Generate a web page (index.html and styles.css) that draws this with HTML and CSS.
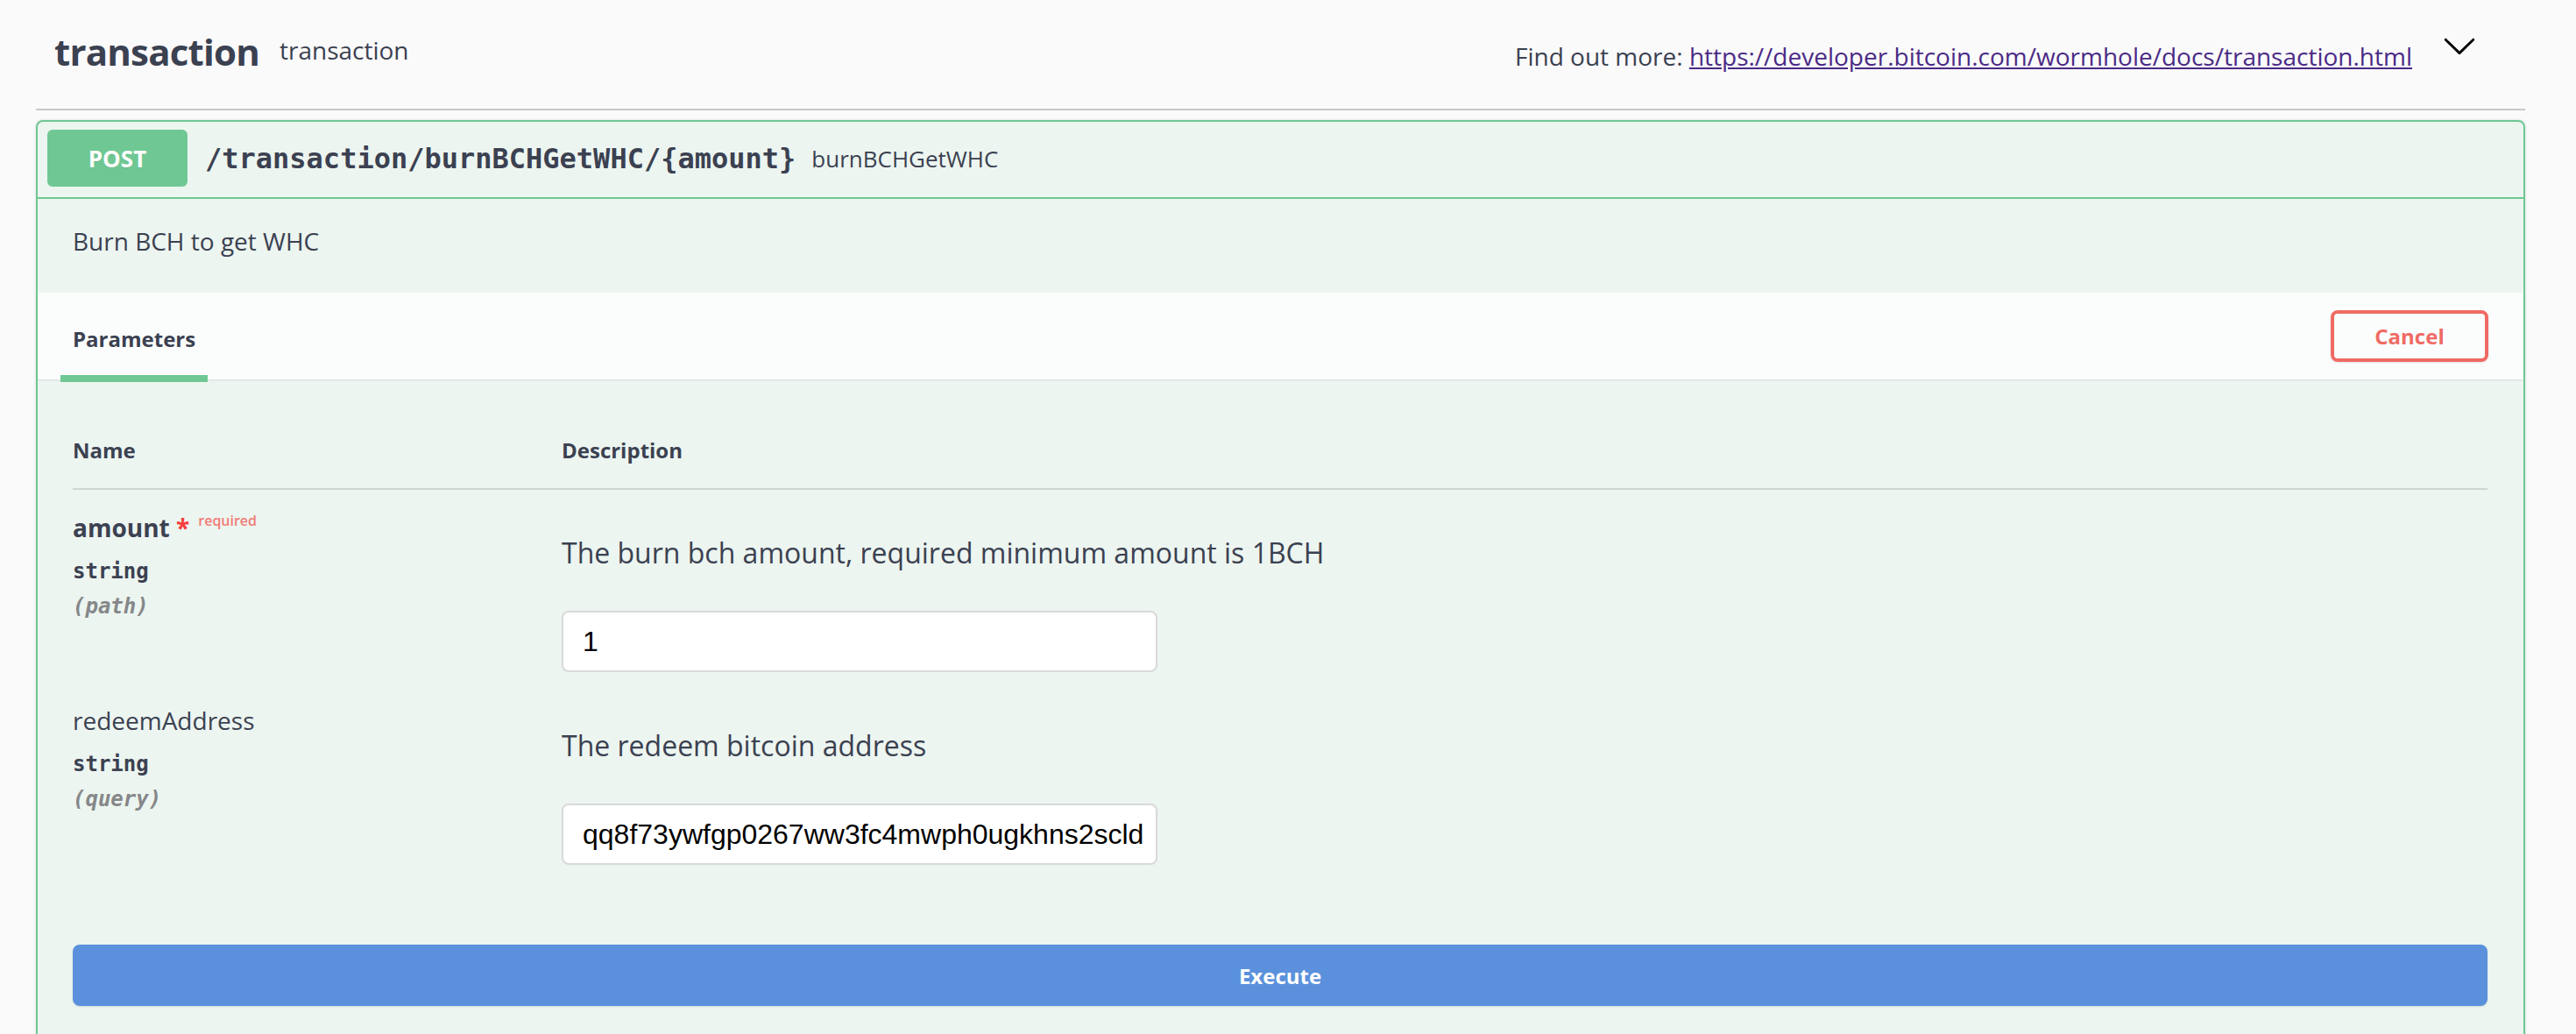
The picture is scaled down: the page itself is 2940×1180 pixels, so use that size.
FILE: index.html
```html
<!DOCTYPE html>
<html lang="en">
<head>
<meta charset="utf-8">
<title>transaction</title>
<link rel="stylesheet" href="styles.css">
</head>
<body>
<div class="wrapper">
  <div class="tag">
    <h4 class="tag-title">transaction</h4>
    <span class="tag-sub">transaction</span>
    <span class="tag-more">Find out more: <a href="#">https://developer.bitcoin.com/wormhole/docs/transaction.html</a></span>
    <svg class="chev" viewBox="0 0 20 20" width="40" height="40"><path d="M17.418 6.109c.272-.268.709-.268.979 0s.271.701 0 .969l-7.908 7.83c-.27.268-.707.268-.979 0l-7.908-7.830c-.27-.268-.27-.701 0-.969.271-.268.709-.268.979 0L10 13.25l7.418-7.141z" fill="#000"/></svg>
  </div>

  <div class="opblock">
    <div class="summary">
      <span class="method">POST</span>
      <span class="path">/transaction/burnBCHGetWHC/{amount}</span>
      <span class="summary-desc">burnBCHGetWHC</span>
    </div>
    <div class="op-desc">Burn BCH to get WHC</div>
    <div class="tab-header">
      <div class="tab-item">Parameters</div>
      <button class="btn-cancel">Cancel</button>
    </div>
    <div class="params">
      <div class="params-head">
        <div>Name</div>
        <div>Description</div>
      </div>
      <div class="param-row">
        <div class="param-name-col">
          <div class="param-name"><b>amount</b> <span class="star">*</span><span class="req">required</span></div>
          <div class="param-type">string</div>
          <div class="param-in">(path)</div>
        </div>
        <div class="param-desc-col">
          <p class="param-desc">The burn bch amount, required minimum amount is 1BCH</p>
          <input class="param-input" type="text" value="1">
        </div>
      </div>
      <div class="param-row">
        <div class="param-name-col">
          <div class="param-name">redeemAddress</div>
          <div class="param-type">string</div>
          <div class="param-in">(query)</div>
        </div>
        <div class="param-desc-col">
          <p class="param-desc">The redeem bitcoin address</p>
          <input class="param-input" type="text" value="qq8f73ywfgp0267ww3fc4mwph0ugkhns2scld">
        </div>
      </div>
      <button class="btn-execute">Execute</button>
    </div>
  </div>
</div>
</body>
</html>
```
FILE: styles.css
```css
* { box-sizing: border-box; }
body {
  margin: 0;
  background: #fafafa;
  font-family: "Open Sans", sans-serif;
  color: #3b4151;
  overflow: hidden;
}
.wrapper { padding: 0 58px 0 41px; }

.tag {
  display: flex;
  align-items: center;
  height: 126px;
  border-bottom: 2px solid #c7c8cc;
  padding: 0 55px 0 21px;
}
.tag-title {
  margin: 0 0 6px 0;
  font-size: 42px;
  font-weight: 700;
  letter-spacing: -0.8px;
  line-height: 60px;
}
.tag-sub {
  margin: 0 0 10px 23px;
  font-size: 28px;
  line-height: 38px;
}
.tag-more {
  margin-left: auto;
  padding-top: 4px;
  font-size: 28px;
  line-height: 38px;
}
.tag-more a { color: #4b2a86; }
.chev { margin: 0 0 20px 34px; flex: none; }

.opblock {
  margin-top: 11px;
  border: 2px solid #6fc893;
  border-radius: 8px;
  background: #ecf5f0;
  box-shadow: 0 0 3px rgba(0, 0, 0, .15);
}
.summary {
  display: flex;
  align-items: center;
  padding: 9px 11px 12px;
  border-bottom: 2px solid #6fc893;
}
.method {
  flex: none;
  width: 160px;
  height: 65px;
  display: flex;
  align-items: center;
  justify-content: center;
  background: #6fc893;
  border-radius: 6px;
  color: #fff;
  font-size: 26px;
  font-weight: 700;
  text-shadow: 0 1px 0 rgba(0, 0, 0, .1);
}
.path {
  margin-left: 20px;
  font-family: "DejaVu Sans Mono", monospace;
  font-size: 32px;
  font-weight: 700;
  color: #3b4151;
}
.summary-desc {
  margin-left: 18px;
  font-size: 26px;
}
.op-desc {
  padding: 29px 40px 40px;
  font-size: 28px;
  line-height: 38px;
}
.tab-header {
  display: flex;
  align-items: center;
  justify-content: space-between;
  height: 99px;
  padding: 0 40px 0 26px;
  background: rgba(255, 255, 255, .8);
  box-shadow: 0 1px 2px rgba(0, 0, 0, .1);
}
.tab-item {
  position: relative;
  height: 100%;
  display: flex;
  align-items: center;
  padding: 5px 14px 0;
  font-size: 24px;
  font-weight: 700;
}
.tab-item::after {
  content: "";
  position: absolute;
  left: 0;
  right: 0;
  bottom: -3px;
  height: 8px;
  background: #6fc893;
}
.btn-cancel {
  width: 180px;
  height: 59px;
  border: 4px solid #ef6b64;
  border-radius: 8px;
  background: transparent;
  color: #ef6b64;
  font-family: "Open Sans", sans-serif;
  font-size: 24px;
  font-weight: 700;
  box-shadow: 0 1px 2px rgba(0, 0, 0, .1);
}
.params { padding: 0 41px 80px 40px; }
.params-head {
  display: grid;
  grid-template-columns: 558px 1fr;
  padding: 64px 0 27px;
  border-bottom: 2px solid #cfd6d2;
  font-size: 24px;
  font-weight: 700;
}
.param-row {
  display: grid;
  grid-template-columns: 558px 1fr;
  padding: 24px 0 12px;
}
.param-name {
  font-size: 28px;
  line-height: 38px;
}
.param-name b { font-weight: 700; }
.star {
  color: #f93e3e;
  font-weight: 700;
}
.req {
  margin-left: 10px;
  font-size: 16px;
  font-weight: 600;
  line-height: 0;
  vertical-align: 13px;
  color: #f07b76;
}
.param-type {
  margin-top: 11px;
  font-family: "DejaVu Sans Mono", monospace;
  font-size: 24px;
  font-weight: 700;
  line-height: 40px;
}
.param-in {
  font-family: "DejaVu Sans Mono", monospace;
  font-size: 24px;
  font-weight: 700;
  font-style: italic;
  line-height: 40px;
  color: #858789;
}
.param-desc {
  margin: 26px 0 0;
  font-size: 32px;
  line-height: 44px;
}
.param-input {
  display: block;
  margin-top: 44px;
  width: 680px;
  height: 70px;
  padding: 0 10px 0 22px;
  border: 2px solid #d9d9d9;
  border-radius: 8px;
  background: #fff;
  font-family: "Liberation Sans", Arial, sans-serif;
  font-size: 32px;
  color: #000;
}
.btn-execute {
  display: block;
  width: 100%;
  height: 70px;
  margin-top: 79px;
  border: 0;
  border-radius: 8px;
  background: #5b91dc;
  color: #fff;
  font-family: "Open Sans", sans-serif;
  font-size: 24px;
  font-weight: 700;
  box-shadow: 0 1px 2px rgba(0, 0, 0, .1);
}
```
